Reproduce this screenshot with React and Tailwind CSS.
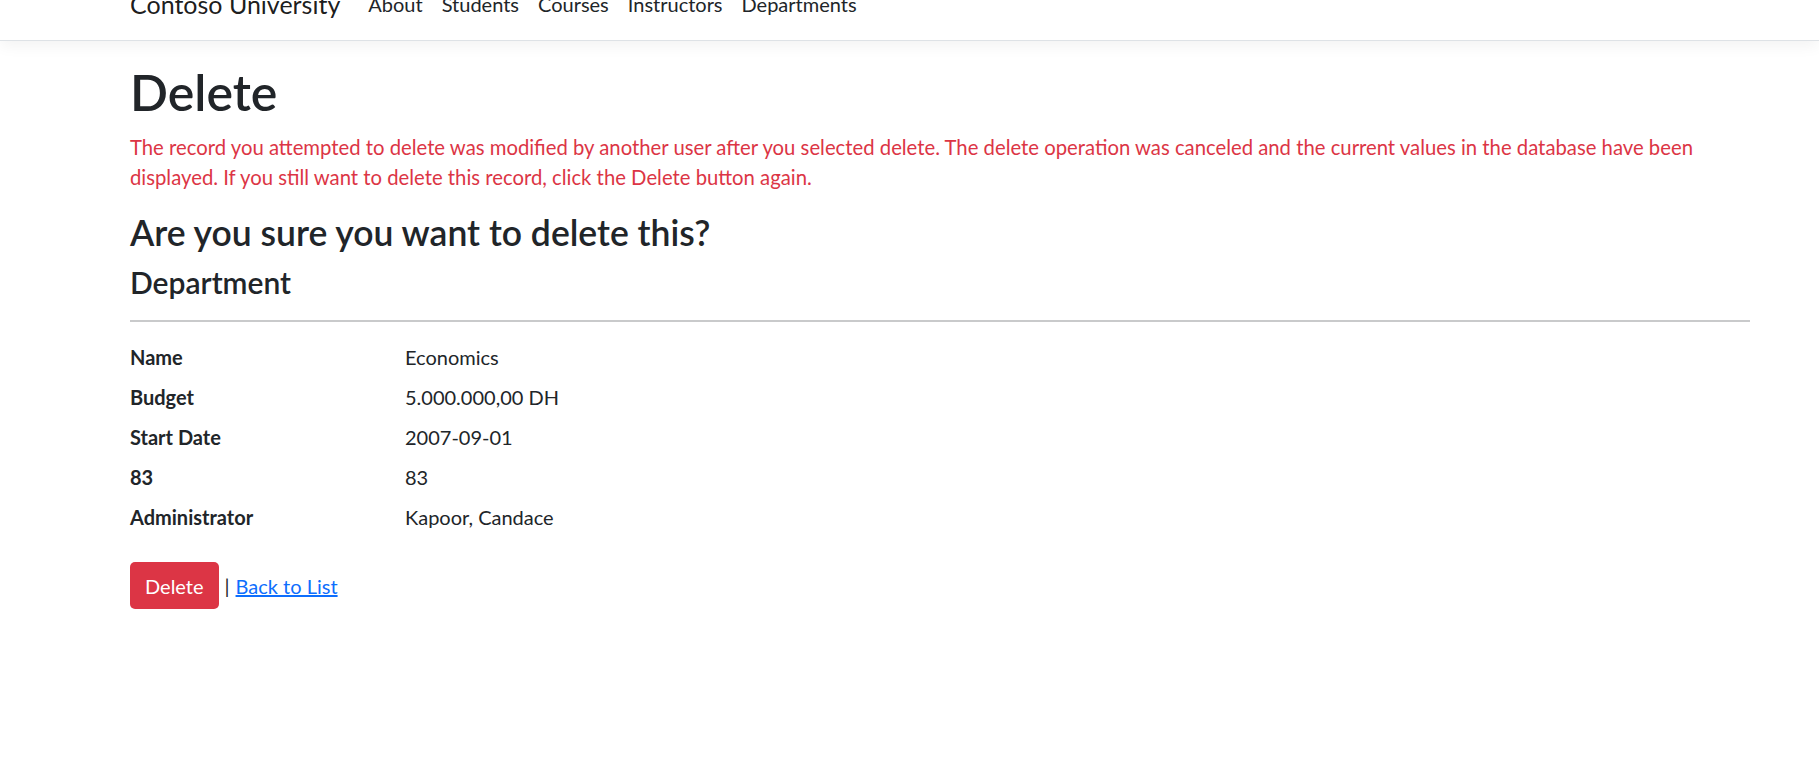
export default function App() {
  const rows = [
    ["Name", "Economics"],
    ["Budget", "5.000.000,00 DH"],
    ["Start Date", "2007-09-01"],
    ["83", "83"],
    ["Administrator", "Kapoor, Candace"],
  ];
  return (
    <div className="min-h-[780px] bg-white text-[#212529] font-['Lato','Liberation_Sans',sans-serif] text-[20px] leading-[30px]">
      <nav className="h-[41px] overflow-hidden border-b border-[#dee2e6] bg-white shadow-[0_5px_15px_rgba(0,0,0,0.05)]">
        <div className="ml-[130px] flex items-start -mt-[15px]">
          <span className="text-[25px] leading-[37px] text-black/90 mr-[28px] pt-[1px]">Contoso University</span>
          <div className="flex gap-[19px] pt-[4px]">
            <span>About</span>
            <span>Students</span>
            <span>Courses</span>
            <span>Instructors</span>
            <span>Departments</span>
          </div>
        </div>
      </nav>
      <main className="ml-[130px] w-[1620px] pt-[21px] flex flex-col">
        <h1 className="text-[50px] leading-[60px] font-semibold mb-[10px]">Delete</h1>
        <p className="text-[#dc3545] mb-[20px] text-[20.3px]">
          The record you attempted to delete was modified by another user after you selected delete. The delete operation was canceled and the current values in the database have been displayed. If you still want to delete this record, click the Delete button again.
        </p>
        <h3 className="text-[35.5px] leading-[42px] font-semibold mb-[10px]">Are you sure you want to delete this?</h3>
        <h4 className="text-[30px] leading-[36px] font-semibold">Department</h4>
        <hr className="mt-[20px] mb-[20px] border-0 h-[2px] bg-[#c9cacb]" />
        <dl className="grid grid-cols-[275px_1fr] mb-[20px]">
          {rows.map(([k, v], i) => (
            <div key={i} className="contents">
              <dt className="font-bold h-[40px]">{k}</dt>
              <dd className="h-[40px]">{v}</dd>
            </div>
          ))}
        </dl>
        <div className="flex items-center">
          <button className="bg-[#dc3545] text-white rounded-[5px] h-[47px] px-[15px] leading-[30px]">Delete</button>
          <span className="ml-[6px]">|</span>
          <a href="#" className="ml-[6px] text-[#0d6efd] underline">Back to List</a>
        </div>
      </main>
    </div>
  );
}
